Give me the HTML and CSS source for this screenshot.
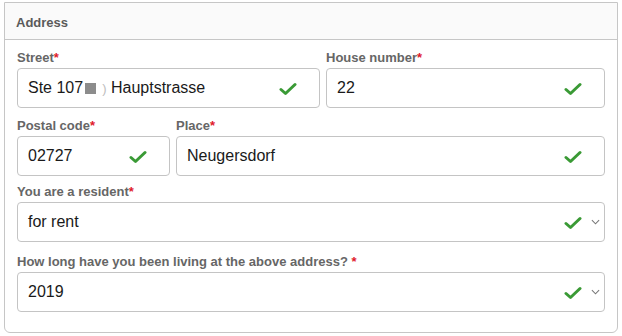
FILE: index.html
```html
<!DOCTYPE html>
<html>
<head>
<meta charset="utf-8">
<link rel="stylesheet" href="styles.css">
</head>
<body>
<section class="card">
  <header class="card-head">Address</header>
  <div class="card-body">
    <div class="row row-street">
      <div class="field">
        <label class="label">Street<span class="req">*</span></label>
        <div class="input">
          <span class="value">Ste 107<span class="redact"></span><span class="redact-paren">)</span> Hauptstrasse</span>
          <svg class="check" viewBox="0 0 18 14"><polyline points="2,7.5 6.5,11.5 16,2.5"/></svg>
        </div>
      </div>
      <div class="field">
        <label class="label">House number<span class="req">*</span></label>
        <div class="input">
          <span class="value">22</span>
          <svg class="check" viewBox="0 0 18 14"><polyline points="2,7.5 6.5,11.5 16,2.5"/></svg>
        </div>
      </div>
    </div>
    <div class="row row-place">
      <div class="field">
        <label class="label">Postal code<span class="req">*</span></label>
        <div class="input">
          <span class="value">02727</span>
          <svg class="check" viewBox="0 0 18 14"><polyline points="2,7.5 6.5,11.5 16,2.5"/></svg>
        </div>
      </div>
      <div class="field">
        <label class="label">Place<span class="req">*</span></label>
        <div class="input">
          <span class="value">Neugersdorf</span>
          <svg class="check" viewBox="0 0 18 14"><polyline points="2,7.5 6.5,11.5 16,2.5"/></svg>
        </div>
      </div>
    </div>
    <div class="field">
      <label class="label">You are a resident<span class="req">*</span></label>
      <div class="input select">
        <span class="value">for rent</span>
        <svg class="check" viewBox="0 0 18 14"><polyline points="2,7.5 6.5,11.5 16,2.5"/></svg>
        <svg class="chev" viewBox="0 0 10 6"><polyline points="1,1 5,5 9,1"/></svg>
      </div>
    </div>
    <div class="field field-last">
      <label class="label">How long have you been living at the above address? <span class="req">*</span></label>
      <div class="input select">
        <span class="value">2019</span>
        <svg class="check" viewBox="0 0 18 14"><polyline points="2,7.5 6.5,11.5 16,2.5"/></svg>
        <svg class="chev" viewBox="0 0 10 6"><polyline points="1,1 5,5 9,1"/></svg>
      </div>
    </div>
  </div>
</section>
</body>
</html>
```

FILE: styles.css
```css
html, body {
  margin: 0;
  background: #ffffff;
}
body {
  padding: 2px 4px 0 4px;
  font-family: "Liberation Sans", Arial, sans-serif;
}
.card {
  width: 614px;
  height: 331px;
  box-sizing: border-box;
  border: 1px solid #c6c6c6;
  border-radius: 0 0 6px 6px;
  background: #ffffff;
}
.card-head {
  height: 37px;
  box-sizing: border-box;
  border-bottom: 1px solid #c6c6c6;
  background: #fafafa;
  padding: 12px 0 0 11px;
  font-size: 13px;
  font-weight: bold;
  color: #5a5a5a;
}
.card-body {
  padding: 10px 12px 0 12px;
}
.row {
  display: grid;
  column-gap: 6px;
}
.row-street {
  grid-template-columns: 303px 1fr;
}
.row-place {
  grid-template-columns: 153px 1fr;
}
.row-place .field {
  margin-bottom: 8px;
}
.field {
  display: flex;
  flex-direction: column;
  margin-bottom: 10px;
}
.field-last {
  margin-top: 12px;
}
.label {
  height: 16px;
  margin-bottom: 2px;
  font-size: 13px;
  font-weight: bold;
  color: #666666;
  line-height: 16px;
  white-space: nowrap;
}
.req {
  color: #e0192b;
}
.input {
  height: 40px;
  box-sizing: border-box;
  border: 1px solid #c4c4c4;
  border-radius: 4px;
  display: flex;
  align-items: center;
  padding: 0 22px 0 10px;
}
.input.select {
  padding-right: 4px;
}
.value {
  flex: 1;
  font-size: 16px;
  color: #1a1a1a;
  white-space: nowrap;
}
.redact {
  display: inline-block;
  width: 11px;
  height: 11px;
  background: #8c8c8c;
  margin: 0 6px 0 2px;
  vertical-align: -1px;
}
.redact-paren {
  color: #bdbdbd;
  font-size: 13px;
}
.check {
  width: 18px;
  height: 14px;
  margin-top: 2px;
  fill: none;
  stroke: #3a9a35;
  stroke-width: 3;
  stroke-linecap: round;
  stroke-linejoin: round;
}
.chev {
  width: 9px;
  height: 6px;
  margin-left: 9px;
  fill: none;
  stroke: #777777;
  stroke-width: 1.2;
}
```
